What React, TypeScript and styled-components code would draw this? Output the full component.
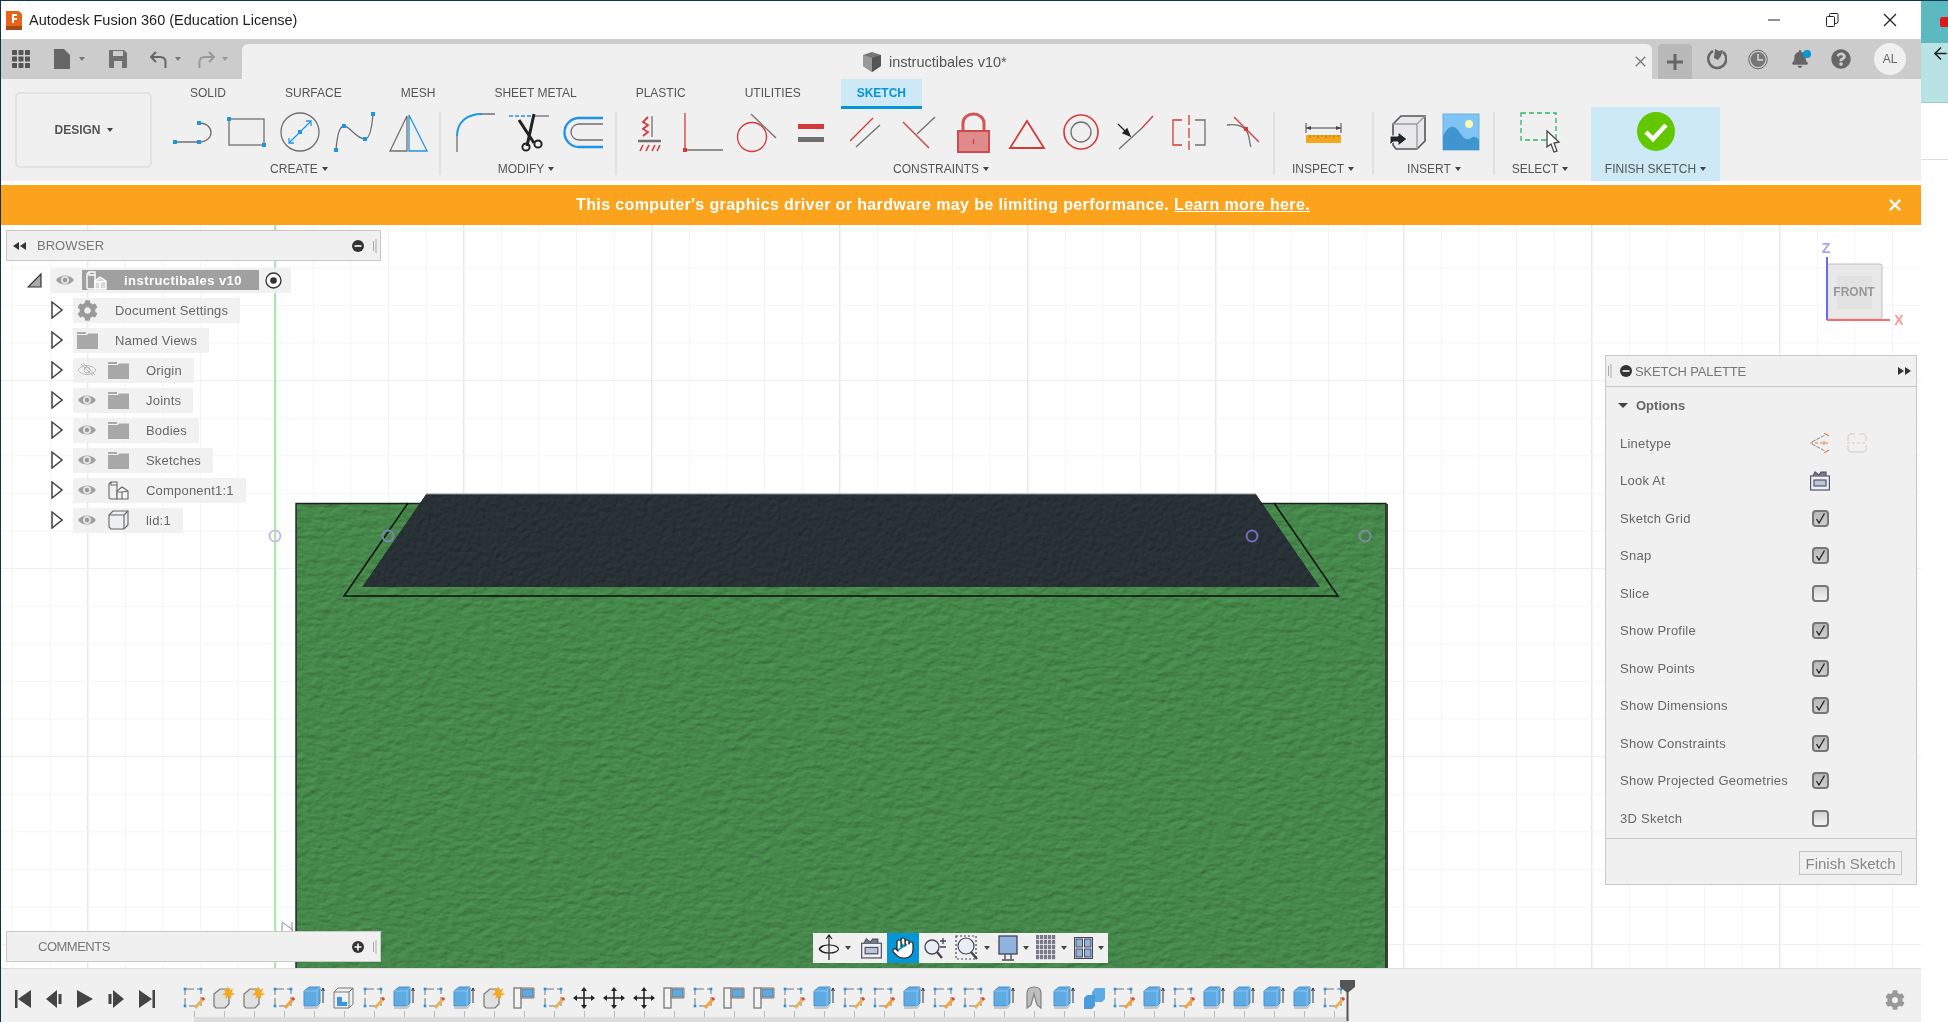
import React from 'react';
import styled, { createGlobalStyle } from 'styled-components';
import { FaBell, FaCog, FaQuestionCircle } from 'react-icons/fa';
import { ArrowLeft, Hand } from 'lucide-react';

const Global = createGlobalStyle`
  html, body { margin: 0; padding: 0; background: #fff; overflow: hidden; }
  * { box-sizing: border-box; }
  body { font-family: "Liberation Sans", Arial, sans-serif; }
`;

const Root = styled.div`
  display: flex; width: 1948px; height: 1022px; overflow: hidden;
  border-top: 1px solid #0f3a4c; filter: blur(0.4px);
`;
const AppWindow = styled.div`
  width: 1921px; display: flex; flex-direction: column; background: #fff;
  border-left: 1px solid #12304f;
`;
const SideStrip = styled.div`width: 27px; display: flex; flex-direction: column; background: #fff;`;
const StripTop = styled.div`height: 42px; background: #5bb9bf; display: flex; align-items: center; justify-content: flex-end;`;
const YtDot = styled.span`width: 8px; height: 10px; background: #e01818; border-radius: 2px 0 0 2px;`;
const StripMid = styled.div`height: 60px; background: #b9e2e5; padding: 1px 0 0 10px; border-bottom: 1px solid #9cc;color: #222;`;
const StripLine = styled.div`margin-top: 56px; border-top: 1px solid #ddd;`;

const TitleBar = styled.div`height: 38px; display: flex; align-items: center; padding-left: 4px; background: #fff;`;
const TitleText = styled.span`margin-left: 6px; font-size: 14.5px; color: #222;`;
const WinControls = styled.div`margin-left: auto; margin-right: 2px; display: flex;`;
const WinBtn = styled.span`width: 58px; height: 38px; display: flex; align-items: center; justify-content: center;`;

const QuickBar = styled.div`height: 40px; display: flex; background: #ccc;`;
const QuickLeft = styled.div`width: 241px; display: flex; align-items: center; padding-left: 11px; padding-bottom: 0;`;
const QuickIcon = styled.span<{ $ml?: number }>`display: inline-flex; align-items: center; margin-left: ${p => p.$ml ?? 0}px;`;
const DocTab = styled.div`
  margin-top: 5px; width: 1410px; background: #f0f0f0; border-radius: 6px 6px 0 0;
  display: flex; align-items: center; padding: 0 6px 0 620px; color: #555; font-size: 14.5px;
`;
const DocName = styled.span`margin-left: 7px;`;
const DocClose = styled.span`margin-left: auto; display: flex;`;
const PlusBtn = styled.span`
  margin: 5px 0 0 6px; width: 34px; background: #b9b9b9; border-radius: 4px 4px 0 0;
  display: flex; align-items: center; justify-content: center;
`;
const RoundTools = styled.div`display: flex; margin-left: 4px;`;
const RoundTool = styled.span`width: 41.5px; display: flex; align-items: center; justify-content: center; color: #666; position: relative;`;
const BellDot = styled.span`position: absolute; top: 11px; left: 24px; width: 8px; height: 8px; border-radius: 50%; background: #0696d7;`;
const Avatar = styled.span`
  width: 32px; height: 32px; margin: 4px 0 0 12px; border-radius: 50%; background: #f0f0f0;
  color: #666; font-size: 12px; display: flex; align-items: center; justify-content: center;
`;

const Ribbon = styled.div`height: 102px; background: #f0f0f0; display: flex; padding-left: 14px;`;
const DesignBox = styled.div`
  width: 137px; height: 76px; margin: 13px 13px 0 0; border: 2px solid #e2e2e2; border-radius: 5px;
  display: flex; align-items: center; justify-content: center; gap: 6px;
  font-size: 12px; font-weight: 700; color: #555;
`;
const RibbonMain = styled.div`display: flex; flex-direction: column;`;
const TabRow = styled.div`height: 30px; display: flex; gap: 27px; padding-left: 9px;`;
const Tab = styled.div<{ $active?: boolean }>`
  padding: 0 16px; display: flex; align-items: center; font-size: 12px;
  margin-left: ${p => (p.$active ? '-3px' : '0')};
  color: ${p => (p.$active ? '#0696d7' : '#555')}; font-weight: ${p => (p.$active ? 700 : 400)};
  background: ${p => (p.$active ? '#cde9f6' : 'transparent')};
  border-bottom: 3px solid ${p => (p.$active ? '#0696d7' : 'transparent')};
`;
const ToolRow = styled.div`height: 72px; display: flex;`;
const Group = styled.div`display: flex; flex-direction: column; padding-top: 3px;`;
const Tools = styled.div`display: flex; height: 40px;`;
const Tool = styled.span`width: 54px; height: 40px; display: flex; justify-content: center;`;
const GroupLabel = styled.div<{ $nudge?: number }>`
  margin: 9px -24px 0; height: 16px; display: flex; align-items: center; justify-content: center; gap: 4px;
  font-size: 12px; color: #555; padding-right: ${p => p.$nudge ?? 0}px; white-space: nowrap;
`;
const Caret = styled.span<{ $color?: string; $size?: number }>`
  display: inline-block; width: 0; height: 0;
  border-left: ${p => p.$size ?? 3.5}px solid transparent; border-right: ${p => p.$size ?? 3.5}px solid transparent;
  border-top: ${p => (p.$size ?? 3.5) + 0.5}px solid ${p => p.$color ?? '#444'};
`;
const Divider = styled.span<{ $l: number; $r: number }>`
  width: 2px; height: 63px; margin: 3px ${p => p.$r}px 0 ${p => p.$l}px; background: #e0e0e0;
`;
const FinishGroup = styled.div`
  width: 129px; height: 74px; margin: -2px 0 0 24px; background: #cde9f6; padding-top: 5px;
  display: flex; flex-direction: column; align-items: center;
`;

const Banner = styled.div`
  margin-top: 4px; height: 40px; background: #fba31d; color: #fff; display: flex; align-items: center;
  padding: 0 20px 0 575px; font-size: 16px; font-weight: 700; letter-spacing: 0.38px;
`;
const BannerLink = styled.span`margin-left: 5px; text-decoration: underline;`;
const BannerClose = styled.span`margin-left: auto; display: flex;`;

const Viewport = styled.div`flex: 1; position: relative; overflow: hidden; background: #fff;`;
const CanvasSvg = styled.svg`position: absolute; left: -1px; top: 0;`;

const Panel = styled.div`position: absolute; left: 5px; width: 375px;`;
const PanelHeader = styled.div`
  height: 31px; background: #f0f0f0; border: 1px solid #c8c8c8; display: flex; align-items: center;
  padding: 0 3px 0 6px; font-size: 13px; color: #777;
`;
const PanelTitle = styled.span<{ $ml: number; $tight?: boolean }>`
  margin-left: ${p => p.$ml}px; letter-spacing: ${p => (p.$tight ? '-0.5px' : '0')};
`;
const HeadEnd = styled.span`margin-left: auto; display: flex; align-items: center; gap: 9px;`;
const Tree = styled.div`margin-top: 4px; display: flex; flex-direction: column; font-size: 13px; color: #666; letter-spacing: 0.2px;`;
const TreeRow = styled.div`height: 30px; display: flex; align-items: center; padding-left: 45px;`;
const RootRow = styled(TreeRow)`padding-left: 21px;`;
const Expander = styled.span`width: 22px; display: flex;`;
const RootExpander = styled.span`width: 24px; display: flex;`;
const Pill = styled.span`
  height: 25px; display: inline-flex; align-items: center; padding: 0 12px 0 4px; background: rgba(240,240,240,0.9);
`;
const RootPill = styled.span`height: 25px; width: 240px; display: flex; align-items: center; padding-left: 4px; background: rgba(240,240,240,0.9);`;
const RootName = styled.span`
  margin-left: 7px; height: 20px; width: 177px; background: #a0a0a0; display: flex; align-items: center;
  padding-left: 4px; color: #fff; font-weight: 700; font-size: 13px; letter-spacing: 0.45px;
`;
const RootNameText = styled.span`margin-left: 17px;`;
const RootRadio = styled.span`margin-left: 6px; display: flex;`;
const Gap = styled.span<{ $w: number }>`width: ${p => p.$w}px; flex: none;`;

const Palette = styled.div`
  position: absolute; top: 130px; left: 1604px; width: 312px; height: 530px; background: #f0f0f0;
  border: 1px solid #c8c8c8; display: flex; flex-direction: column; color: #666; font-size: 13px;
`;
const PaletteHeader = styled.div`
  height: 31px; flex: none; border-bottom: 1px solid #c8c8c8; display: flex; align-items: center; padding: 0 5px 0 2px; color: #777; font-size: 13px; letter-spacing: -0.15px;
`;
const OptionsRow = styled.div`height: 37.5px; flex: none; display: flex; align-items: center; gap: 8px; padding-left: 12px; font-weight: 700; font-size: 13px;`;
const OptionRow = styled.div`height: 37.5px; flex: none; display: flex; align-items: center; padding-left: 14px; letter-spacing: 0.25px;`;
const OptionLabel = styled.span`width: 192px;`;
const IconPair = styled.span`display: flex; gap: 17px; margin-left: -2px;`;
const Check = styled.span<{ $on: boolean }>`
  width: 17px; height: 17px; border-radius: 4px; border: 2px solid #777; display: flex; align-items: center; justify-content: center;
  background: ${p => (p.$on ? 'linear-gradient(#b8b8b8,#cfcfcf)' : 'linear-gradient(#d2d2d2,#f4f4f4)')};
`;
const PaletteFooter = styled.div`
  margin-top: auto; height: 46px; border-top: 1px solid #c8c8c8; display: flex; align-items: center; justify-content: flex-end; padding: 3px 14px 0 0;
`;
const FinishBtn = styled.span`
  width: 103px; height: 24px; border: 1px solid #c4c4c4; display: flex; align-items: center; justify-content: center; color: #888; font-size: 15px;
`;

const NavBar = styled.div`
  position: absolute; left: 812px; top: 708px; height: 30px; width: 295px; background: #f0f0f0;
  display: flex; align-items: center;
`;
const NavItem = styled.span<{ $active?: boolean; $w: number }>`
  width: ${p => p.$w}px; height: 30px; display: flex; align-items: center; justify-content: center; gap: 5px;
  background: ${p => (p.$active ? '#0696d7' : 'transparent')}; color: #222;
`;

const Timeline = styled.div`
  height: 54px; flex: none; background: #f0f0f0; border-top: 1px solid #ddd; display: flex; align-items: center; padding-left: 14px;
`;
const Transport = styled.div`display: flex; gap: 15px; width: 164px; flex: none; margin-top: 6px;`;
const Track = styled.div`position: relative; display: flex; height: 53px; padding-top: 17px;`;
const Cell = styled.div`width: 30px; display: flex; flex-direction: column; align-items: center;`;
const CellIcon = styled.span`height: 25px; display: flex;`;
const Tick = styled.span`width: 1px; height: 6px; background: #bbb;`;
const Rail = styled.span`align-self: stretch; height: 5px; background: #ddd; ${Cell}:first-child & { margin-left: 15px; }`;
const Playhead = styled.span`position: absolute; left: 1161px; top: 11px; display: flex;`;
const TimelineGear = styled.span`margin-left: auto; margin-right: 16px; margin-top: 8px; color: #999; display: flex;`;

const G = '#707070', B = '#1f95e6', R = '#d43a3a';
const Sq = ({ x, y, c = B, s = 4 }: { x: number; y: number; c?: string; s?: number }) => <rect x={x - s / 2} y={y - s / 2} width={s} height={s} fill={c} stroke="none" />;
const I40 = ({ children, w = 40 }: { children: React.ReactNode; w?: number }) => (
  <svg width={w} height={40} viewBox={`0 0 ${w} 40`} fill="none" stroke={G} strokeWidth={1.3} style={{ overflow: 'visible' }}>{children}</svg>
);

const LineIcon = () => <I40><path d="M3 30H27C43 30 43 11 27 11" /><Sq x={3} y={30} /><Sq x={27} y={30} /><Sq x={27} y={11} /></I40>;
const RectIcon = () => <I40><rect x={3} y={7} width={35} height={26} /><Sq x={3} y={7} /><Sq x={38} y={33} /></I40>;
const CircleIcon = () => <I40><ellipse cx={20} cy={20} rx={19} ry={19} /><path d="M10 30L30 10" stroke={B} /><path d="M9 26V31H14M26 9H31V14" stroke={B} /><Sq x={20} y={20} /></I40>;
const SplineIcon = () => <I40><path d="M2 38C3 25 5 14 10 14C16 14 22 27 31 27C36 27 38 14 39 2" /><Sq x={2} y={38} /><Sq x={10} y={14} /><Sq x={31} y={27} /><Sq x={39} y={2} /></I40>;
const MirrorIcon = () => <I40><path d="M19 4L2 39H19Z" /><path d="M21 3L39 39H21Z" stroke={B} /></I40>;
const FilletIcon = () => <I40><path d="M2 24V40M27 2H40" /><path d="M2 24C2 10 12 2 27 2" stroke={B} strokeWidth={2} /></I40>;
const TrimIcon = () => (
  <I40>
    <path d="M0 4H23" stroke={B} strokeDasharray="4 2" /><path d="M25 4H40" />
    <path d="M10 8L25 31M25 2L18 34" stroke="#222" strokeWidth={3} />
    <circle cx={17} cy={35} r={3.6} stroke="#222" strokeWidth={2} /><circle cx={29} cy={32} r={3.6} stroke="#222" strokeWidth={2} />
  </I40>
);
const OffsetIcon = () => <I40><path d="M40 6H16A14.5 14.5 0 0 0 16 35H40" stroke={B} strokeWidth={2.4} /><path d="M40 12H16A8 8 0 0 0 16 28H40" /></I40>;
const GroundIcon = () => <I40><path d="M23 4V25" /><path d="M19 5L14 10L19 13L14 17L19 20L14 24" stroke={R} strokeWidth={1.8} /><path d="M9 29H32" strokeWidth={2.5} /><path d="M14 33L11 39M20 33L17 39M26 33L23 39M31 33L28 39" stroke={R} strokeWidth={1.6} /></I40>;
const CoincidentIcon = () => <I40><path d="M2 1V38" stroke={R} /><path d="M4 38H40" /><Sq x={2} y={38} c={R} /></I40>;
const TangentIcon = () => <I40><circle cx={15} cy={25} r={14.5} stroke={R} /><path d="M14 2L39 26" /></I40>;
const EqualIcon = () => <I40><rect x={7} y={12} width={26} height={5} fill={R} stroke="none" /><rect x={7} y={25} width={26} height={5} fill={G} stroke="none" /></I40>;
const ParallelIcon = () => <I40><path d="M5 29L28 6" stroke={R} /><path d="M11 35L35 13" /></I40>;
const PerpIcon = () => <I40><path d="M4 10L30 36" stroke={R} /><path d="M18 22L36 5" /></I40>;
const LockIcon = () => (
  <I40><path d="M10 19V11A10.5 9 0 0 1 31 11V19" stroke="#d45555" strokeWidth={3} /><rect x={5} y={19} width={31} height={21} fill="#e08b8b" stroke="#cf4a4a" strokeWidth={2} /><path d="M20.5 27V32" stroke={R} /></I40>
);
const TriIcon = () => <I40><path d="M20 9L37 36H3Z" stroke={R} strokeWidth={1.8} /></I40>;
const ConcentricIcon = () => <I40><circle cx={20} cy={20} r={17} stroke={R} strokeWidth={1.6} /><circle cx={20} cy={20} r={10} /></I40>;
const MidpointIcon = () => <I40><path d="M4 37L27 16" /><path d="M27 16L38 4" stroke={R} /><path d="M3 12L12 21" stroke="#222" /><path d="M15 24L8 21L12 17Z" fill="#222" stroke="#222" /></I40>;
const SymmetryIcon = () => <I40><path d="M13 8H4V33H13" stroke={R} /><path d="M26 8H36V33H26" /><path d="M20 3V38" stroke={R} strokeDasharray="10 3" /></I40>;
const CurvatureIcon = () => <I40><path d="M4 13C12 12 18 13 23 18C27 23 26 31 28 35" /><path d="M11 5L36 30" stroke={R} /><Sq x={23} y={17} c={R} /></I40>;
const MeasureIcon = () => (
  <I40>
    <path d="M3 11V21M38 11V21M3 16H38" strokeWidth={1} stroke="#444" /><path d="M3 16L8 14V18ZM38 16L33 14V18Z" fill="#444" stroke="none" />
    <rect x={3} y={23} width={35} height={8} fill="#f5a61d" stroke="none" /><path d="M7 23V26M11 23V25M15 23V26M19 23V25M23 23V26M27 23V25M31 23V26M35 23V25" stroke="#a87414" strokeWidth={1} />
  </I40>
);
const InsertIcon = () => (
  <I40>
    <path d="M14 4H38V29L30 37H9L6 33V12Z" fill="#e8e8ec" stroke="#555" strokeWidth={1.6} /><path d="M6 12H30V37M30 12L38 4" stroke="#999" />
    <path d="M3 24H11V20L20 27L11 34V30H6L3 33Z" fill="#20262b" stroke="#fff" strokeWidth={1} />
  </I40>
);
const ImageIcon = () => (
  <I40>
    <rect x={2} y={2} width={36} height={36} fill="#7fc4f5" stroke="#6aaedf" strokeWidth={1} />
    <path d="M2 38V24C7 14 12 12 17 18C21 24 25 30 30 26C33 24 35 24 38 28V38Z" fill="#3f95d0" stroke="none" />
    <circle cx={28} cy={12} r={4} fill="#fdf7b4" stroke="none" />
  </I40>
);
const SelectIcon = () => (
  <I40>
    <rect x={1} y={1} width={35} height={27} stroke="#2fb765" strokeDasharray="5 3" />
    <path d="M27 19V35L31 32L34 40L37 39L34 31L39 30Z" fill="#fff" stroke="#444" />
  </I40>
);
const FinishCheck = () => (
  <svg width={40} height={40} viewBox="0 0 40 40"><ellipse cx={20} cy={19.5} rx={19} ry={19.5} fill="#63c700" /><path d="M10 20L17 27L30 13" fill="none" stroke="#fff" strokeWidth={4.5} /></svg>
);

const sketchTools = [LineIcon, RectIcon, CircleIcon, SplineIcon, MirrorIcon];
const modifyTools = [FilletIcon, TrimIcon, OffsetIcon];
const constraintTools = [GroundIcon, CoincidentIcon, TangentIcon, EqualIcon, ParallelIcon, PerpIcon, LockIcon, TriIcon, ConcentricIcon, MidpointIcon, SymmetryIcon, CurvatureIcon];
const renderTools = (list: React.FC[]) => list.map((C, i) => <Tool key={i}><C /></Tool>);

const Eye = ({ off }: { off?: boolean }) => (
  <svg width={20} height={14} viewBox="0 0 20 14" fill="none">
    {off ? (
      <><path d="M1 7C5 1 15 1 19 7C15 13 5 13 1 7Z" stroke="#bbb" /><circle cx={10} cy={7} r={3} stroke="#bbb" /><path d="M4 1L16 13M6 0L18 12" stroke="#bbb" /></>
    ) : (
      <><path d="M1 7C5 1 15 1 19 7C15 13 5 13 1 7Z" fill="#a0a0a0" /><circle cx={10} cy={7} r={4} fill="#e4e4e4" /><circle cx={10} cy={7} r={2.2} fill="#999" /></>
    )}
  </svg>
);
const Folder = () => (
  <svg width={21} height={17} viewBox="0 0 21 17"><path d="M0 0H9V2H0Z" fill="#a8a8a8" /><path d="M0 3H10L11 1.5H21V17H0Z" fill="#a8a8a8" /></svg>
);
const CompIcon = ({ light }: { light?: boolean }) => (
  <svg width={21} height={19} viewBox="0 0 21 19" fill={light ? '#d8d8d8' : '#f4f4f4'} stroke={light ? '#fff' : '#666'} strokeWidth={light ? 1.4 : 1.1}>
    <path d="M1 3L3 1H9V18H2.5L1 17Z" fill="none" /><path d="M3 1V4H9" fill="none" /><path d="M9 10L14 6L20 10V18H9Z" /><path d="M9 11H14L20 10M14 11V18" fill="none" />
  </svg>
);
const BoxIcon = () => (
  <svg width={21} height={20} viewBox="0 0 21 20" fill="none" stroke="#666" strokeWidth={1.1}>
    <path d="M1 5L5 1H20V15L16 19H3L1 17Z" fill="#eef0f2" /><path d="M1 5H16V19M16 5L20 1" />
  </svg>
);
const Expand = () => <svg width={12} height={18} viewBox="0 0 12 18"><path d="M1 1L11 9L1 17Z" fill="#fff" stroke="#444" strokeWidth={1.5} /></svg>;
const MinusBadge = ({ plus }: { plus?: boolean }) => (
  <svg width={12} height={12} viewBox="0 0 12 12"><circle cx={6} cy={6} r={6} fill="#333" /><path d={plus ? 'M2.5 6H9.5M6 2.5V9.5' : 'M2.5 6H9.5'} stroke="#fff" strokeWidth={1.6} /></svg>
);
const Grip = () => <svg width={4} height={14} viewBox="0 0 4 14"><path d="M.5 2V12M3 0V14" stroke="#aaa" /></svg>;
const DoubleArrow = ({ left }: { left?: boolean }) => (
  <svg width={13} height={8} viewBox="0 0 13 8"><path d={left ? 'M6 0V8L0 4ZM13 0V8L7 4Z' : 'M0 0V8L6 4ZM7 0V8L13 4Z'} fill="#333" /></svg>
);
const CheckMark = () => <svg width={13} height={13} viewBox="0 0 13 13"><path d="M2.5 7L5 11L10.5 1.5" fill="none" stroke="#222" strokeWidth={1.3} /></svg>;

const LineTypeA = () => (
  <svg width={20} height={20} viewBox="0 0 20 20" fill="none" stroke="#e39a63" strokeWidth={1.1}>
    <path d="M0 10H20" strokeDasharray="3 2" stroke="#e2803f" /><path d="M2 9L15 2M2 11L15 18" stroke="#999" strokeDasharray="4 1" /><path d="M14 0L19 3M14 20L19 17M14 8V12" stroke="#e2803f" />
  </svg>
);
const LineTypeB = () => (
  <svg width={20} height={20} viewBox="0 0 20 20" fill="none" stroke="#ccc" strokeWidth={1}>
    <path d="M1 8V3L3 1H8M12 1H17L19 3V8M19 12V17L17 19H3L1 17V12" /><path d="M0 10H20" stroke="#edc5a8" strokeDasharray="3 2" />
  </svg>
);
const LookAt = ({ s = 20 }: { s?: number }) => (
  <svg width={s} height={s} viewBox="0 0 20 20" fill="none" stroke="#556" strokeWidth={1.2}>
    <rect x={.6} y={5} width={18.8} height={14} fill="#eef0f4" /><rect x={4} y={9} width={12} height={6} fill="#b9c6d6" /><path d="M3 5L5 1L9 4L11 1L16 1V5" fill="#778" />
  </svg>
);

const CANVAS_W = 1921;
const minorV = Array.from({ length: 52 }, (_, i) => 12.5 + 37.6 * i);
const minorH = Array.from({ length: 22 }, (_, i) => 230.2 + 37.6 * i);

const CadCanvas = () => (
  <CanvasSvg width={CANVAS_W} height={743} viewBox="0 225 1921 743">
    <defs>
      <filter id="greenTex" x="0" y="0" width="1" height="1" colorInterpolationFilters="sRGB">
        <feTurbulence type="fractalNoise" baseFrequency="0.09 0.16" numOctaves={3} seed={4} result="n" />
        <feDiffuseLighting in="n" surfaceScale={0.9} diffuseConstant={1} lightingColor="#fff" result="l"><feDistantLight azimuth={60} elevation={62} /></feDiffuseLighting>
        <feComposite in="SourceGraphic" in2="l" operator="arithmetic" k1={1.13} k2={0} k3={0} k4={0} result="c" />
        <feComposite in="c" in2="SourceAlpha" operator="in" />
      </filter>
      <filter id="darkTex" x="0" y="0" width="1" height="1" colorInterpolationFilters="sRGB">
        <feTurbulence type="fractalNoise" baseFrequency="0.2" numOctaves={2} seed={8} result="n" />
        <feDiffuseLighting in="n" surfaceScale={0.8} diffuseConstant={1} lightingColor="#fff" result="l"><feDistantLight azimuth={60} elevation={62} /></feDiffuseLighting>
        <feComposite in="SourceGraphic" in2="l" operator="arithmetic" k1={1.13} k2={0} k3={0} k4={0} result="c" />
        <feComposite in="c" in2="SourceAlpha" operator="in" />
      </filter>
    </defs>
    {minorV.map((x, i) => <line key={i} x1={x} x2={x} y1={225} y2={968} stroke={(i + 3) % 5 === 0 ? '#e8e8e8' : '#f4f4f4'} strokeWidth={(i + 3) % 5 === 0 ? 1.5 : 1} />)}
    {minorH.map((y, i) => <line key={i} y1={y} y2={y} x1={0} x2={1921} stroke={(i + 1) % 5 === 0 ? '#eeeeee' : '#f5f5f5'} strokeWidth={1} />)}
    <line x1={275} x2={275} y1={225} y2={968} stroke="#8ee28e" strokeWidth={1.4} />
    <rect x={296} y={503} width={1090} height={466} fill="#46884b" filter="url(#greenTex)" />
    <path d="M296 968V503.5H1386V968" fill="none" stroke="#1b2220" strokeWidth={1.4} />
    <path d="M1387 504V968" stroke="#3a3f3d" strokeWidth={2} />
    <path d="M426 494H1256L1320 587H362Z" fill="#283136" filter="url(#darkTex)" />
    <path d="M426 494H1256" stroke="#8a9096" strokeWidth={1} />
    <path d="M408 503L344 596H1338L1274 503" fill="none" stroke="#0c0f0c" strokeWidth={1.5} />
    <g fill="none" strokeWidth={2}>
      <circle cx={275} cy={536} r={5.5} stroke="#c6bcec" />
      <circle cx={388} cy={536} r={5.5} stroke="#7d84b0" />
      <circle cx={1252} cy={536} r={5.5} stroke="#7c6ab8" />
      <circle cx={1365} cy={536} r={5.5} stroke="#7d8aa0" />
    </g>
    <path d="M282 922L293 930M282 923V932M292 922V932" fill="none" stroke="#888" strokeWidth={1} />
    <g>
      <rect x={1827} y={264} width={55} height={55} rx={2} fill="#e8e8e8" stroke="#c0c0c0" />
      <rect x={1837} y={276} width={35} height={33} fill="#e2e2e2" />
      <text x={1854} y={296} textAnchor="middle" fontFamily="Liberation Sans" fontWeight={700} fontSize={12} fill="#979797">FRONT</text>
      <line x1={1827} x2={1827} y1={257} y2={320} stroke="#6a6af0" strokeWidth={2} />
      <line x1={1827} x2={1890} y1={320} y2={320} stroke="#f07070" strokeWidth={2} />
      <text x={1826} y={253} textAnchor="middle" fontFamily="Liberation Sans" fontWeight={700} fontSize={14} fill="#a3a3f5">Z</text>
      <text x={1899} y={325} textAnchor="middle" fontFamily="Liberation Sans" fontWeight={700} fontSize={14} fill="#f59a9a">X</text>
    </g>
  </CanvasSvg>
);

const I24 = ({ children }: { children: React.ReactNode }) => <svg width={24} height={24} viewBox="0 0 24 24" fill="none" stroke="#777" strokeWidth={1}>{children}</svg>;
const TLSketch = ({ pencil }: { pencil?: string }) => (
  <I24>
    <rect x={3} y={3} width={16} height={17} strokeDasharray="9 3" />
    <Sq x={3} y={3} s={2.6} /><Sq x={19} y={3} s={2.6} /><Sq x={3} y={20} s={2.6} />
    <path d="M22 12L13 22" stroke={pencil ?? '#f2a53c'} strokeWidth={3} /><path d="M22 12L20.5 13.7" stroke="#e14040" strokeWidth={3} />
  </I24>
);
const TLExtrude = () => (
  <I24>
    <path d="M2 5L7 1H18V17L15 20H2Z" fill="#5eaae3" stroke="#4a90c8" />
    <path d="M2 5H15V20M15 5L18 1" stroke="#8cc6ee" />
    <path d="M2 21H15L18 18V20L15 23H2Z" fill="#c9c9c9" stroke="none" />
    <path d="M21 17V2M19.5 5L21 2L22.500 5" stroke="#333" />
  </I24>
);
const TLStar = () => (
  <I24>
    <path d="M2 8L8 3H17V18L13 22H4L2 20Z" fill="#e0e0e0" stroke="#777" strokeWidth={1.2} />
    <path d="M16 0L17.500 4L21.500 2.500L19.500 6.500L23 8.500L19 9.500L19.500 13L16.500 10.500L13.500 13L14 9.500L10 8.500L13.500 6.500L11.500 2.500L15 4Z" fill="#f8a91f" stroke="none" />
  </I24>
);
const TLHole = () => (
  <I24>
    <path d="M2 6L6 2H21V18L17 22H2Z" fill="#eef0f2" /><path d="M2 6H17V22M17 6L21 2" />
    <path d="M5 11H10V16H15V20H5Z" fill="#3f95d9" stroke="none" />
  </I24>
);
const TLFlag = () => (
  <I24>
    <rect x={2} y={2} width={7} height={20} fill="#f4f4f4" stroke="#777" strokeWidth={1.3} />
    <path d="M9 2H22V12H9Z" fill="#fff" stroke="#777" /><rect x={10} y={3} width={11} height={8} fill="#5eaae3" />
  </I24>
);
const TLMove = () => (
  <I24>
    <path d="M12 4V20M4 12H20" stroke="#222" strokeWidth={1.6} />
    <path d="M12 1L15 5H9ZM12 23L15 19H9ZM1 12L5 9V15ZM23 12L19 9V15Z" fill="#222" stroke="none" />
  </I24>
);
const TLRibbon = () => (
  <I24>
    <path d="M5 22V7C5 3 8 1 12 1C16 1 19 3 19 7V22L15 19L12 8L9 19Z" fill="#bdbdbd" stroke="#808080" strokeWidth={1.2} />
  </I24>
);
const TLCombine = () => (
  <I24>
    <path d="M10 6L13 2H23V13L20 16H10Z" fill="#5eaae3" stroke="none" />
    <path d="M2 12L5 9H13V20L10 23H2Z" fill="#4a9bdc" stroke="none" />
  </I24>
);

const S = 'sketch', E = 'ext', T = 'star', H = 'hole', F = 'flag', M = 'move', RB = 'rib', C = 'comb';
const timeline = [S, T, T, S, E, H, S, E, S, E, T, F, S, M, M, M, F, S, F, F, S, E, S, S, E, S, S, E, RB, E, C, S, E, S, E, E, E, E, S];
const TimelineIcon = ({ kind, index }: { kind: string; index: number }) => {
  switch (kind) {
    case S: return <TLSketch pencil={index % 2 ? '#f2a53c' : '#e8b45c'} />;
    case E: return <TLExtrude />;
    case T: return <TLStar />;
    case H: return <TLHole />;
    case F: return <TLFlag />;
    case M: return <TLMove />;
    case RB: return <TLRibbon />;
    default: return <TLCombine />;
  }
};

const treeRows = [
  { name: 'Document Settings', kind: 'gear' },
  { name: 'Named Views', kind: 'folder' },
  { name: 'Origin', kind: 'off' },
  { name: 'Joints', kind: 'on' },
  { name: 'Bodies', kind: 'on' },
  { name: 'Sketches', kind: 'on' },
  { name: 'Component1:1', kind: 'comp' },
  { name: 'lid:1', kind: 'box' },
];

const options = [
  ['Sketch Grid', true], ['Snap', true], ['Slice', false], ['Show Profile', true], ['Show Points', true],
  ['Show Dimensions', true], ['Show Constraints', true], ['Show Projected Geometries', true], ['3D Sketch', false],
] as [string, boolean][];

const Cross = ({ s = 14, c = '#222', w = 1.3 }: { s?: number; c?: string; w?: number }) => (
  <svg width={s} height={s} viewBox="0 0 14 14"><path d="M1 1L13 13M13 1L1 13" stroke={c} strokeWidth={w} /></svg>
);

export default function App() {
  return (
    <Root>
      <Global />
      <AppWindow>
        <TitleBar>
          <svg width={18} height={21} viewBox="0 0 18 21">
            <path d="M1 1H14L17 4V20H1Z" fill="#e8641b" /><path d="M1 16H17V20H1Z" fill="#a64a1c" />
            <path d="M7 4H12V6H9V8H12V10H9V13H7Z" fill="#fff" />
          </svg>
          <TitleText>Autodesk Fusion 360 (Education License)</TitleText>
          <WinControls>
            <WinBtn><svg width={12} height={2}><path d="M0 1H12" stroke="#222" /></svg></WinBtn>
            <WinBtn><svg width={13} height={14} viewBox="0 0 13 14" fill="none" stroke="#222"><rect x={.5} y={3.5} width={8} height={10} rx={1} /><path d="M3.500 3V1.500Q3.500 .5 4.500 .5H11Q12 .5 12 1.500V9Q12 10.500 9 10.500" /></svg></WinBtn>
            <WinBtn><Cross /></WinBtn>
          </WinControls>
        </TitleBar>

        <QuickBar>
          <QuickLeft>
            <QuickIcon>
              <svg width={18} height={18} viewBox="0 0 18 18" fill="#555">
                {[0, 6.500, 13].flatMap(x => [0, 6.500, 13].map(y => <rect key={`${x}-${y}`} x={x} y={y} width={5} height={5} rx={.7} />))}
              </svg>
            </QuickIcon>
            <QuickIcon $ml={24}><svg width={16} height={20} viewBox="0 0 16 20"><path d="M0 0H10L16 6V20H0Z" fill="#666" /></svg></QuickIcon>
            <QuickIcon $ml={9}><Caret $color="#777" /></QuickIcon>
            <QuickIcon $ml={24}>
              <svg width={18} height={18} viewBox="0 0 18 18"><path d="M0 1Q0 0 1 0H15L18 3V17Q18 18 17 18H1Q0 18 0 17Z" fill="#707070" /><rect x={4} y={1} width={10} height={5} fill="#ccc" /><rect x={5} y={11} width={8} height={7} fill="#ccc" /></svg>
            </QuickIcon>
            <QuickIcon $ml={23}><svg width={17} height={17} viewBox="0 0 17 17" fill="none"><path d="M6 1L1 6L6 11M1 6H10Q15.500 6 15.500 11V17" stroke="#666" strokeWidth={2} /></svg></QuickIcon>
            <QuickIcon $ml={8}><Caret $color="#777" /></QuickIcon>
            <QuickIcon $ml={17}><svg width={17} height={17} viewBox="0 0 17 17" fill="none"><path d="M11 1L16 6L11 11M16 6H7Q1.500 6 1.500 11V17" stroke="#999" strokeWidth={2} /></svg></QuickIcon>
            <QuickIcon $ml={7}><Caret $color="#999" /></QuickIcon>
          </QuickLeft>
          <DocTab>
            <svg width={20} height={20} viewBox="0 0 20 20">
              <path d="M1 3L10 0L19 3V14L10 20L1 14Z" fill="#777" /><path d="M1 3L10 6V20L1 14Z" fill="#999" /><path d="M10 6L19 3V14L10 20Z" fill="#555" />
            </svg>
            <DocName>instructibales v10*</DocName>
            <DocClose><Cross s={11} c="#777" w={1.6} /></DocClose>
          </DocTab>
          <PlusBtn><svg width={16} height={16} viewBox="0 0 16 16"><path d="M8 0V16M0 8H16" stroke="#666" strokeWidth={3} /></svg></PlusBtn>
          <RoundTools>
            <RoundTool>
              <svg width={20} height={22} viewBox="0 0 20 22" fill="none"><path d="M6 3A9 9 0 1 0 16 4" stroke="#666" strokeWidth={2.5} /><path d="M8 1L12 3L16 2L14 8L11 12L7 10Z" fill="#666" /></svg>
            </RoundTool>
            <RoundTool>
              <svg width={20} height={21} viewBox="0 0 20 21" fill="none"><circle cx={10} cy={10.500} r={9.300} stroke="#666" /><circle cx={10} cy={10.500} r={7.500} fill="#777" /><path d="M10 5V11H15" stroke="#ddd" strokeWidth={1.4} /></svg>
            </RoundTool>
            <RoundTool><FaBell size={18} /><BellDot /></RoundTool>
            <RoundTool><FaQuestionCircle size={20} /></RoundTool>
          </RoundTools>
          <Avatar>AL</Avatar>
        </QuickBar>

        <Ribbon>
          <DesignBox>DESIGN <Caret /></DesignBox>
          <RibbonMain>
            <TabRow>
              {['SOLID', 'SURFACE', 'MESH', 'SHEET METAL', 'PLASTIC', 'UTILITIES'].map(t => <Tab key={t}>{t}</Tab>)}
              <Tab $active>SKETCH</Tab>
            </TabRow>
            <ToolRow>
              <Group><Tools>{renderTools(sketchTools)}</Tools><GroupLabel $nudge={2}>CREATE<Caret /></GroupLabel></Group>
              <Divider $l={4} $r={7} />
              <Group><Tools>{renderTools(modifyTools)}</Tools><GroupLabel $nudge={6}>MODIFY<Caret /></GroupLabel></Group>
              <Divider $l={5} $r={5} />
              <Group><Tools>{renderTools(constraintTools)}</Tools><GroupLabel $nudge={10}>CONSTRAINTS<Caret /></GroupLabel></Group>
              <Divider $l={3} $r={21} />
              <Group><Tools><Tool><MeasureIcon /></Tool></Tools><GroupLabel>INSPECT<Caret /></GroupLabel></Group>
              <Divider $l={22} $r={6} />
              <Group><Tools><Tool><InsertIcon /></Tool><Tool><ImageIcon /></Tool></Tools><GroupLabel>INSERT<Caret /></GroupLabel></Group>
              <Divider $l={5} $r={18} />
              <Group><Tools><Tool><SelectIcon /></Tool></Tools><GroupLabel>SELECT<Caret /></GroupLabel></Group>
              <FinishGroup><FinishCheck /><GroupLabel>FINISH SKETCH<Caret /></GroupLabel></FinishGroup>
            </ToolRow>
          </RibbonMain>
        </Ribbon>

        <Banner>
          This computer's graphics driver or hardware may be limiting performance.
          <BannerLink>Learn more here.</BannerLink>
          <BannerClose><Cross s={12} c="#fff" w={2.6} /></BannerClose>
        </Banner>

        <Viewport>
          <CadCanvas />

          <Panel style={{ top: 5 }}>
            <PanelHeader>
              <DoubleArrow left />
              <PanelTitle $ml={11}>BROWSER</PanelTitle>
              <HeadEnd><MinusBadge /><Grip /></HeadEnd>
            </PanelHeader>
            <Tree>
              <RootRow>
                <RootExpander><svg width={15} height={15} viewBox="0 0 15 15"><path d="M14 1V14H1Z" fill="#aaa" stroke="#333" strokeWidth={1.2} /></svg></RootExpander>
                <RootPill>
                  <Eye />
                  <RootName><CompIcon light /><RootNameText>instructibales v10</RootNameText></RootName>
                  <RootRadio>
                    <svg width={17} height={17} viewBox="0 0 17 17"><circle cx={8.500} cy={8.500} r={7.500} fill="#fff" stroke="#333" strokeWidth={1.3} /><circle cx={8.500} cy={8.500} r={3.300} fill="#333" /></svg>
                  </RootRadio>
                </RootPill>
              </RootRow>
              {treeRows.map(r => (
                <TreeRow key={r.name}>
                  <Expander><Expand /></Expander>
                  <Pill>
                    {r.kind === 'gear' && <><FaCog size={21} color="#9a9a9a" /><Gap $w={17} /></>}
                    {r.kind === 'folder' && <><Folder /><Gap $w={17} /></>}
                    {r.kind !== 'gear' && r.kind !== 'folder' && <><Eye off={r.kind === 'off'} /><Gap $w={11} /></>}
                    {(r.kind === 'on' || r.kind === 'off') && <Folder />}
                    {r.kind === 'comp' && <CompIcon />}
                    {r.kind === 'box' && <BoxIcon />}
                    {r.kind !== 'gear' && r.kind !== 'folder' && <Gap $w={17} />}
                    {r.name}
                  </Pill>
                </TreeRow>
              ))}
            </Tree>
          </Panel>

          <Panel style={{ top: 706 }}>
            <PanelHeader>
              <PanelTitle $ml={25} $tight>COMMENTS</PanelTitle>
              <HeadEnd><MinusBadge plus /><Grip /></HeadEnd>
            </PanelHeader>
          </Panel>

          <Palette>
            <PaletteHeader>
              <Grip /><Gap $w={8} /><MinusBadge /><Gap $w={3} />SKETCH PALETTE
              <HeadEnd><DoubleArrow /></HeadEnd>
            </PaletteHeader>
            <OptionsRow><Caret $size={5} />Options</OptionsRow>
            <OptionRow><OptionLabel>Linetype</OptionLabel><IconPair><LineTypeA /><LineTypeB /></IconPair></OptionRow>
            <OptionRow><OptionLabel>Look At</OptionLabel><IconPair><LookAt /></IconPair></OptionRow>
            {options.map(([label, on]) => (
              <OptionRow key={label}><OptionLabel>{label}</OptionLabel><Check $on={on}>{on && <CheckMark />}</Check></OptionRow>
            ))}
            <PaletteFooter><FinishBtn>Finish Sketch</FinishBtn></PaletteFooter>
          </Palette>

          <NavBar>
            <NavItem $w={42}>
              <svg width={22} height={28} viewBox="0 0 22 28" fill="none" stroke="#222" strokeWidth={1.2}>
                <path d="M11 2V26M8 5L11 1L14 5" /><ellipse cx={11} cy={15} rx={9.500} ry={4} /><path d="M1 15L5 12M1 15L5 18" />
              </svg>
              <Caret />
            </NavItem>
            <NavItem $w={32}><LookAt s={21} /></NavItem>
            <NavItem $w={32} $active><Hand size={24} fill="#fff" strokeWidth={1.2} /></NavItem>
            <NavItem $w={31}>
              <svg width={24} height={24} viewBox="0 0 24 24" fill="none" stroke="#445" strokeWidth={1.3}>
                <circle cx={9} cy={11} r={7} fill="#e8eef4" /><path d="M14 16L19 22" strokeWidth={2.4} /><path d="M17 5H23M20 2V8M17 11H23" />
              </svg>
            </NavItem>
            <NavItem $w={44}>
              <svg width={24} height={26} viewBox="0 0 24 26" fill="none" stroke="#445" strokeWidth={1.2}>
                <rect x={1} y={1} width={20} height={23} strokeDasharray="2 2" /><circle cx={11} cy={11} r={8} fill="#e8eef4" /><path d="M16 17L22 24" strokeWidth={2.4} />
              </svg>
              <Caret />
            </NavItem>
            <NavItem $w={38}>
              <svg width={20} height={26} viewBox="0 0 20 26" fill="none" stroke="#445" strokeWidth={1.3}>
                <rect x={1} y={1} width={18} height={18} fill="#8fb3dc" /><path d="M7 19V24M13 19V24M4 25H16" />
              </svg>
              <Caret />
            </NavItem>
            <NavItem $w={38}>
              <svg width={20} height={26} viewBox="0 0 20 26" fill="#7a7a8a">
                {Array.from({ length: 25 }, (_, i) => <rect key={i} x={(i % 5) * 4} y={Math.floor(i / 5) * 5} width={3.200} height={4.200} />)}
              </svg>
              <Caret />
            </NavItem>
            <NavItem $w={38}>
              <svg width={19} height={22} viewBox="0 0 19 22" fill="#8fb3dc" stroke="#445">
                <rect x={.5} y={.5} width={18} height={21} fill="#fff" /><rect x={2} y={2} width={6.500} height={8} /><rect x={10.500} y={2} width={6.500} height={8} /><rect x={2} y={12} width={6.500} height={8} /><rect x={10.500} y={12} width={6.500} height={8} />
              </svg>
              <Caret />
            </NavItem>
          </NavBar>
        </Viewport>

        <Timeline>
          <Transport>
            <svg width={16} height={18} viewBox="0 0 16 18" fill="#444"><rect width={2.500} height={18} /><path d="M16 0V18L3 9Z" /></svg>
            <svg width={16} height={18} viewBox="0 0 16 18" fill="#444"><path d="M11 0V18L0 9Z" /><rect x={12.500} y={4} width={3} height={10} /></svg>
            <svg width={16} height={18} viewBox="0 0 16 18" fill="#444"><path d="M0 0V18L16 9Z" /></svg>
            <svg width={16} height={18} viewBox="0 0 16 18" fill="#444"><path d="M5 0V18L16 9Z" /><rect x={.5} y={4} width={3} height={10} /></svg>
            <svg width={16} height={18} viewBox="0 0 16 18" fill="#444"><path d="M0 0V18L13 9Z" /><rect x={13.500} width={2.500} height={18} /></svg>
          </Transport>
          <Track>
            {timeline.map((k, i) => (
              <Cell key={i}><CellIcon><TimelineIcon kind={k} index={i} /></CellIcon><Tick /><Rail /></Cell>
            ))}
            <Playhead>
              <svg width={16} height={41} viewBox="0 0 16 41"><path d="M0 0H15V7L7.500 13L0 7Z" fill="#555" /><path d="M7.500 10V41" stroke="#555" strokeWidth={2} /></svg>
            </Playhead>
          </Track>
          <TimelineGear><FaCog size={20} /></TimelineGear>
        </Timeline>
      </AppWindow>

      <SideStrip>
        <StripTop><YtDot /></StripTop>
        <StripMid><ArrowLeft size={19} /></StripMid>
        <StripLine />
      </SideStrip>
    </Root>
  );
}
